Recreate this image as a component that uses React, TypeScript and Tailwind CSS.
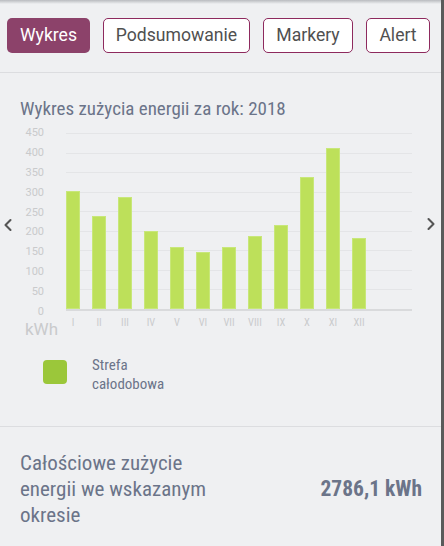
import { ChevronLeft, ChevronRight } from 'lucide-react';

const tabs = [
  { label: 'Wykres', w: 'w-[83px]' },
  { label: 'Podsumowanie', w: 'w-[147px]' },
  { label: 'Markery', w: 'w-[90px]' },
  { label: 'Alert', w: 'w-[64px]' },
];

const months = ['I', 'II', 'III', 'IV', 'V', 'VI', 'VII', 'VIII', 'IX', 'X', 'XI', 'XII'];
const values = [298, 235, 282, 197, 158, 143, 158, 184, 212, 335, 406, 179];
const ticks = [450, 400, 350, 300, 250, 200, 150, 100, 50, 0];

// 178px na 450 kWh
const scale = 178 / 450;

const condensed = { fontFamily: 'Roboto, "Noto Sans", sans-serif', fontStretch: '80%' };

export default function App() {
  return (
    <div
      className="w-[444px] h-[546px] bg-[#eff0f2] border-r-[3px] border-[#5a5a5a] relative overflow-hidden"
      style={{ fontFamily: 'Roboto, "Noto Sans", sans-serif' }}
    >
      <div className="absolute top-0 left-0 right-0 h-[4px] bg-gradient-to-b from-[#b9bbbf] to-transparent" />

      {/* zakładki */}
      <div className="flex items-center gap-[13px] pl-[7px] pt-[18px] pb-[19px] border-b border-[#dcdde0]">
        {tabs.map((t, i) =>
          i === 0 ? (
            <button
              key={t.label}
              className={`${t.w} h-[35px] rounded-[5px] bg-[#8c426a] text-white text-[17.6px] leading-none`}
            >
              {t.label}
            </button>
          ) : (
            <button
              key={t.label}
              className={`${t.w} h-[35px] rounded-[5px] bg-white border border-[#8e2a5e] text-[#505050] text-[17.6px] leading-none`}
            >
              {t.label}
            </button>
          )
        )}
      </div>

      {/* wykres */}
      <div className="pt-[23px]">
        <h1 className="pl-[20px] text-[19px] leading-[26px] text-[#6b7489]" style={condensed}>
          Wykres zużycia energii za rok: 2018
        </h1>

        <div className="relative h-[227px]">
          <ChevronLeft className="absolute left-[-2px] top-[93px] w-[20px] h-[20px] text-[#555]" strokeWidth={2.5} />
          <ChevronRight className="absolute left-[421px] top-[92px] w-[20px] h-[20px] text-[#555]" strokeWidth={2.5} />

          <div className="flex pt-[1px]">
            {/* oś Y */}
            <div className="w-[44px] flex flex-col">
              {ticks.map((t) => (
                <div key={t} className="h-[19.8px] flex items-center justify-end text-[11px] text-[#c9cacc] leading-none">
                  {t}
                </div>
              ))}
              <div className="mt-[0px] pl-[25px] text-[17px] text-[#c9cacc] leading-none whitespace-nowrap">kWh</div>
            </div>

            {/* obszar wykresu */}
            <div className="ml-[22px] w-[346px] flex flex-col">
              <div className="relative h-[188px]">
                <div className="absolute inset-x-0 top-[10px] bottom-0 flex flex-col justify-between">
                  {ticks.map((t) => (
                    <div
                      key={t}
                      className={t === 0 ? 'h-[2px] bg-[#d9dadc]' : 'h-px bg-[#e4e5e7]'}
                    />
                  ))}
                </div>
                <div className="absolute inset-x-0 bottom-[2px] flex items-end gap-[12px]">
                  {values.map((v, i) => (
                    <div
                      key={i}
                      className="w-[14px] bg-[#bde05a] border border-[#c8e77a]"
                      style={{ height: `${v * scale}px` }}
                    />
                  ))}
                </div>
              </div>
              <div className="flex gap-[12px] pt-[7px]">
                {months.map((m) => (
                  <div key={m} className="w-[14px] text-center text-[10.5px] text-[#cacbcd] leading-none" style={condensed}>
                    {m}
                  </div>
                ))}
              </div>
            </div>
          </div>
        </div>

        {/* legenda */}
        <div className="flex items-start pl-[43px] pt-[3px] pb-[32px] border-b border-[#dcdde0]">
          <div className="w-[24px] h-[24px] mt-[8px] rounded-[4px] bg-[#9bc73a]" />
          <div className="ml-[25px] mt-[4px] text-[15px] leading-[19px] text-[#6b7489]" style={condensed}>
            Strefa
            <br />
            całodobowa
          </div>
        </div>
      </div>

      {/* podsumowanie */}
      <div className="flex items-center justify-between pl-[20px] pr-[19px] pt-[23px]">
        <div className="text-[21px] leading-[26px] text-[#6b7489] w-[220px]" style={condensed}>
          Całościowe zużycie
          <br />
          energii we wskazanym
          <br />
          okresie
        </div>
        <div className="text-[21.5px] font-bold text-[#6b7489]" style={condensed}>
          2786,1 kWh
        </div>
      </div>
    </div>
  );
}
